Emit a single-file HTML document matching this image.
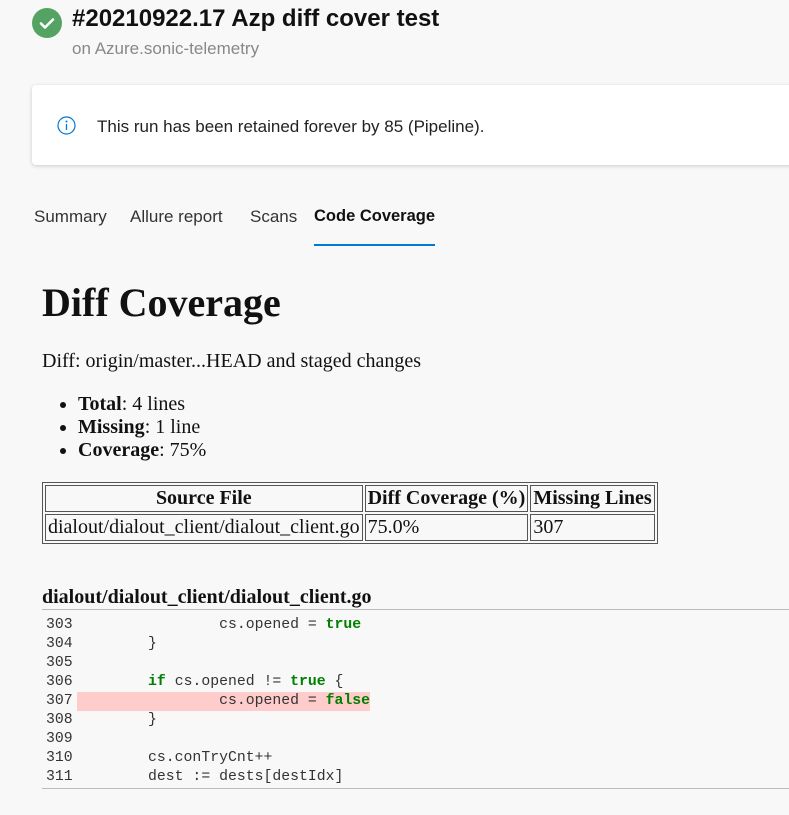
<!DOCTYPE html>
<html><head><style>
body{margin:0;background:#f8f8f8;width:789px;height:815px;overflow:hidden;position:relative;font-family:"Segoe UI","Liberation Sans",sans-serif}
.abs{position:absolute;white-space:nowrap}
.serif{font-family:"Liberation Serif",serif;color:#111}
.code{font-family:"Liberation Mono",monospace;font-size:14.8px;color:#333}
.row{position:absolute;left:42px;height:19px;line-height:19px;width:747px}
.ln{position:absolute;left:4px}
.c{position:absolute;left:35px;white-space:pre}
.k{color:#008000;font-weight:bold}
table{border:1px solid #555;border-spacing:2px;position:absolute;left:42px;top:482px;font-size:20px}
td,th{border:1px solid #555;padding:0 2px;height:25px;line-height:23px}
ul{margin:0;padding-left:36px}
</style></head><body>
<svg class="abs" style="left:32px;top:8px" width="30" height="30"><circle cx="15" cy="15" r="15" fill="#55a362"/><path d="M9 15.5l4 4 8-8" stroke="#fff" stroke-width="2.6" fill="none" stroke-linecap="round" stroke-linejoin="round"/></svg>
<div class="abs" style="left:72px;top:5px;font-size:24px;font-weight:600;color:#111">#20210922.17 Azp diff cover test</div>
<div class="abs" style="left:72px;top:39px;font-size:17px;color:#888">on Azure.sonic-telemetry</div>
<div class="abs" style="left:32px;top:85px;width:770px;height:80px;background:#fff;border-radius:4px;box-shadow:0 1px 4px rgba(0,0,0,.18)"></div>
<svg class="abs" style="left:57px;top:116px" width="19" height="19"><circle cx="9.5" cy="9.5" r="8.5" stroke="#0078d4" stroke-width="1.2" fill="none"/><circle cx="9.5" cy="5.5" r="1" fill="#0078d4"/><path d="M9.5 8v6" stroke="#0078d4" stroke-width="1.3"/></svg>
<div class="abs" style="left:97px;top:117px;font-size:17px;color:#222">This run has been retained forever by 85 (Pipeline).</div>
<div class="abs" style="left:34px;top:207px;font-size:17px;color:#333">Summary</div>
<div class="abs" style="left:130px;top:207px;font-size:17px;color:#333">Allure report</div>
<div class="abs" style="left:250px;top:207px;font-size:17px;color:#333">Scans</div>
<div class="abs" style="left:314px;top:207px;font-size:16.5px;color:#111;font-weight:600">Code Coverage</div>
<div class="abs" style="left:314px;top:244px;width:121px;height:2px;background:#0078d4"></div>
<div class="abs serif" style="left:42px;top:279px;font-size:40px;font-weight:bold">Diff Coverage</div>
<div class="abs serif" style="left:42px;top:350px;font-size:20px">Diff: origin/master...HEAD and staged changes</div>
<div class="abs serif" style="left:42px;top:393px;font-size:20px;line-height:23px"><ul><li><b>Total</b>: 4 lines</li><li><b>Missing</b>: 1 line</li><li><b>Coverage</b>: 75%</li></ul></div>
<table class="serif"><tr><th style="width:309px">Source File</th><th>Diff Coverage (%)</th><th>Missing Lines</th></tr>
<tr><td>dialout/dialout_client/dialout_client.go</td><td>75.0%</td><td>307</td></tr></table>
<div class="abs serif" style="left:42px;top:586px;font-size:20px;font-weight:bold">dialout/dialout_client/dialout_client.go</div>
<div class="abs" style="left:42px;top:609px;width:747px;height:1px;background:#bbb"></div>
<div class="code">
<div class="row" style="top:616px"><span class="ln">303</span><span class="c">                cs.opened = <span class="k">true</span></span></div>
<div class="row" style="top:635px"><span class="ln">304</span><span class="c">        }</span></div>
<div class="row" style="top:654px"><span class="ln">305</span></div>
<div class="row" style="top:673px"><span class="ln">306</span><span class="c">        <span class="k">if</span> cs.opened != <span class="k">true</span> {</span></div>
<div class="row" style="top:692px"><span class="ln">307</span><span class="c" style="background:#fcc">                cs.opened = <span class="k">false</span></span></div>
<div class="row" style="top:711px"><span class="ln">308</span><span class="c">        }</span></div>
<div class="row" style="top:730px"><span class="ln">309</span></div>
<div class="row" style="top:749px"><span class="ln">310</span><span class="c">        cs.conTryCnt++</span></div>
<div class="row" style="top:768px"><span class="ln">311</span><span class="c">        dest := dests[destIdx]</span></div>
</div>
<div class="abs" style="left:42px;top:788px;width:747px;height:1px;background:#bbb"></div>
</body></html>
